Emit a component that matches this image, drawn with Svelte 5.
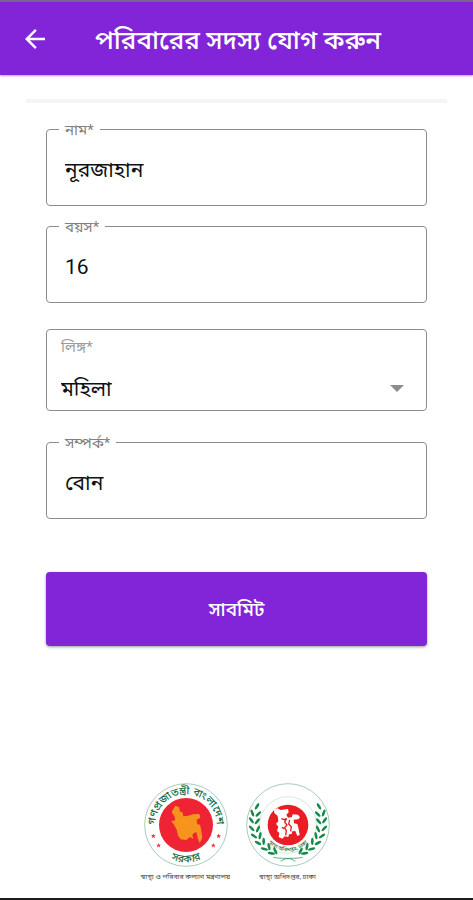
<script>
  let name = 'নূরজাহান';
  let age = '16';
  let gender = 'মহিলা';
  let relation = 'বোন';

  const genders = ['মহিলা', 'পুরুষ'];

  // Laurel leaves: position and tilt for the left half, mirrored for the right
  const leaves = [
    [69, 109, 30], [55, 129, -20], [73, 132, 45],
    [52, 151, -35], [70, 154, 40], [53, 175, -45],
    [72, 177, 25], [60, 198, -55], [78, 197, 10],
    [72, 219, -60], [89, 214, 0], [91, 237, -75],
    [105, 230, -10], [112, 250, -80], [124, 243, -25]
  ];
</script>

<div class="screen">
  <header class="app-bar">
    <button type="button" class="app-bar__back" aria-label="পিছনে">
      <svg viewBox="0 0 24 24" aria-hidden="true">
        <path d="M20 11H7.83l5.59-5.59L12 4l-8 8 8 8 1.41-1.41L7.83 13H20v-2z" />
      </svg>
    </button>
    <h1 class="app-bar__title">পরিবারের সদস্য যোগ করুন</h1>
  </header>

  <hr class="divider" />

  <form class="form" on:submit|preventDefault>
    <div class="field">
      <label class="field__label" for="name">নাম*</label>
      <input class="field__input" id="name" type="text" bind:value={name} />
    </div>

    <div class="field">
      <label class="field__label" for="age">বয়স*</label>
      <input class="field__input field__input--number" id="age" type="text" inputmode="numeric" bind:value={age} />
    </div>

    <div class="field field--select">
      <label class="field__caption" for="gender">লিঙ্গ*</label>
      <select class="field__select" id="gender" bind:value={gender}>
        {#each genders as option}
          <option value={option}>{option}</option>
        {/each}
      </select>
      <svg class="field__arrow" viewBox="0 0 14 7" aria-hidden="true">
        <path d="M0 0h14L7 7z" />
      </svg>
    </div>

    <div class="field">
      <label class="field__label" for="relation">সম্পর্ক*</label>
      <input class="field__input" id="relation" type="text" bind:value={relation} />
    </div>

    <button type="submit" class="submit">সাবমিট</button>
  </form>

  <footer class="footer">
    <figure class="seal">
      <svg class="seal__image" viewBox="43 39 252 252" aria-hidden="true">
        <defs>
          <path id="gov-top" d="M77 165a92 92 0 0 1 184 0" />
          <path id="gov-bottom" d="M57 165a112 112 0 0 0 224 0" />
        </defs>
        <circle cx="169" cy="165" r="124" fill="#fff" stroke="#a9cbbb" stroke-width="3" />
        <circle cx="169" cy="165" r="81" fill="#ee2435" />
        <path
          fill="#f7941d"
          d="M137 107l12 5 1 12 9 4 2 11 15-2 14-4 19-1 3 11-11 6 2 14 8 1 4 18 3 21-8 16-6-15-4-18-7 3-5 6 3 12-10-6-11 9-17-2-8-11-4-18-8-15-8-10 12-3-3-12-8-12z"
        />
        <text class="seal__ring" font-size="32">
          <textPath href="#gov-top" startOffset="50%" text-anchor="middle">গণপ্রজাতন্ত্রী বাংলাদেশ</textPath>
        </text>
        <text class="seal__ring" font-size="32">
          <textPath href="#gov-bottom" startOffset="50%" text-anchor="middle">সরকার</textPath>
        </text>
        <g fill="#ee2435">
          {#each [[71, 198], [87, 226], [267, 198], [251, 226]] as [x, y]}
            <path transform="translate({x} {y})" d="M0-7l2 5 5 0-4 3 2 6-5-4-5 4 2-6-4-3 5 0z" />
          {/each}
        </g>
      </svg>
      <figcaption class="seal__caption">স্বাস্থ্য ও পরিবার কল্যাণ মন্ত্রণালয়</figcaption>
    </figure>

    <figure class="seal">
      <svg class="seal__image" viewBox="36 39 252 252" aria-hidden="true">
        <defs>
          <path id="health-bottom" d="M83 165a79 79 0 0 0 158 0" />
        </defs>
        <circle cx="162" cy="165" r="124" fill="#fff" stroke="#a9cbbb" stroke-width="3" />
        <circle cx="162" cy="165" r="85" fill="none" stroke="#c3dbcf" stroke-width="2" />
        <circle cx="162" cy="165" r="61" fill="#ea1c24" />
        <path
          fill="#fff"
          d="M120 119l10-4 10 5 22-3 2 10-7 7 5 9 12-2 2-8 16 1 6 8-5 6-14 1 1 11 10 2 4 15 3 18-7 3-6-15-9 1-2 8-8 1-2 8-11-2-7 7-11-5 2-12-7-6 4-13-7-9 7-7-2-16-10-9z"
        />
        <path
          fill="none"
          stroke="#ea1c24"
          stroke-width="4"
          d="M142 146l9 3 7-4 M158 146l-6 10 7 9-7 8 5 9-2 14 M167 150l-3 12 8 8-2 14 M143 172l8 4"
        />
        {#each ['', 'translate(324 0) scale(-1 1)'] as mirror}
          <g fill="#178a4c" transform={mirror}>
            {#each leaves as [x, y, tilt]}
              <ellipse cx={x} cy={y} rx="4" ry="11" transform="rotate({tilt} {x} {y})" />
            {/each}
            <path d="M118 262c28 6 48-2 66 12" fill="none" stroke="#178a4c" stroke-width="2" />
          </g>
        {/each}
        <text class="seal__ring" font-size="16">
          <textPath href="#health-bottom" startOffset="50%" text-anchor="middle">স্বাস্থ্য অধিদপ্তর, ঢাকা</textPath>
        </text>
      </svg>
      <figcaption class="seal__caption">স্বাস্থ্য অধিদপ্তর, ঢাকা</figcaption>
    </figure>
  </footer>
</div>

<style>
  :global(body) {
    margin: 0;
    background: #fff;
  }

  .screen {
    box-sizing: border-box;
    display: flex;
    flex-direction: column;
    min-height: 100vh;
    border-top: 2px solid #796694;
    border-bottom: 2px solid #1c1c1c;
    font-family: Roboto, "Noto Sans Bengali", "Noto Sans", sans-serif;
    color: #111;
  }

  .app-bar {
    display: flex;
    align-items: center;
    height: 73px;
    padding: 0 20px;
    background: #8224d8;
    color: #fff;
    box-shadow: 0 1px 2px rgba(130, 36, 216, 0.5);
  }

  .app-bar__back {
    width: 30px;
    height: 30px;
    padding: 0;
    border: 0;
    background: none;
    cursor: pointer;
  }

  .app-bar__back svg {
    display: block;
    width: 100%;
    fill: #fff;
  }

  .app-bar__title {
    margin: 0 0 0 45px;
    padding-top: 2px;
    font-size: 26px;
    font-weight: 500;
    line-height: 40px;
    white-space: nowrap;
  }

  .divider {
    align-self: stretch;
    height: 4px;
    margin: 24px 26px 0;
    border: 0;
    background: #f5f5f5;
  }

  .form {
    display: flex;
    flex-direction: column;
    margin: 26px 46px 0;
  }

  .field {
    position: relative;
    box-sizing: border-box;
    height: 77px;
    margin-bottom: 20px;
    border: 1px solid #8c8c8c;
    border-radius: 4px;
  }

  .field__label {
    position: absolute;
    top: -10px;
    left: 12px;
    padding: 0 6px;
    background: #fff;
    color: #808080;
    font-size: 15px;
    line-height: 20px;
  }

  .field__input {
    box-sizing: border-box;
    width: 100%;
    height: 100%;
    padding: 8px 18px 0;
    border: 0;
    outline: 0;
    background: none;
    color: inherit;
    font: inherit;
    font-size: 21px;
  }

  .field__input--number {
    padding-top: 4px;
  }

  .field--select {
    display: flex;
    flex-direction: column;
    height: 82px;
    margin: 6px 0 31px;
    padding-top: 7px;
  }

  .field__caption {
    padding-left: 14px;
    color: #9c9c9c;
    font-size: 15px;
    line-height: 20px;
  }

  .field__select {
    flex: 1;
    width: 100%;
    padding: 11px 14px 0;
    border: 0;
    outline: 0;
    appearance: none;
    background: none;
    color: inherit;
    font: inherit;
    font-size: 21px;
  }

  .field__arrow {
    position: absolute;
    right: 22px;
    bottom: 18px;
    width: 14px;
    fill: #8c8c8c;
    pointer-events: none;
  }

  .submit {
    height: 74px;
    margin-top: 33px;
    padding: 4px 0 0;
    border: 0;
    border-radius: 4px;
    background: #8224d8;
    box-shadow: 0 1px 3px rgba(0, 0, 0, 0.4);
    color: #fff;
    font: inherit;
    font-size: 19px;
    font-weight: 500;
    cursor: pointer;
  }

  .footer {
    display: flex;
    justify-content: center;
    gap: 8px;
    margin-top: auto;
    padding-bottom: 15px;
  }

  .seal {
    display: flex;
    flex-direction: column;
    align-items: center;
    width: 94px;
    margin: 0;
  }

  .seal__image {
    width: 84px;
    height: 84px;
  }

  .seal__ring {
    fill: #176b46;
    font-weight: 500;
  }

  .seal__caption {
    margin-top: 4px;
    color: #444;
    font-size: 7px;
    line-height: 12px;
    white-space: nowrap;
  }
</style>
